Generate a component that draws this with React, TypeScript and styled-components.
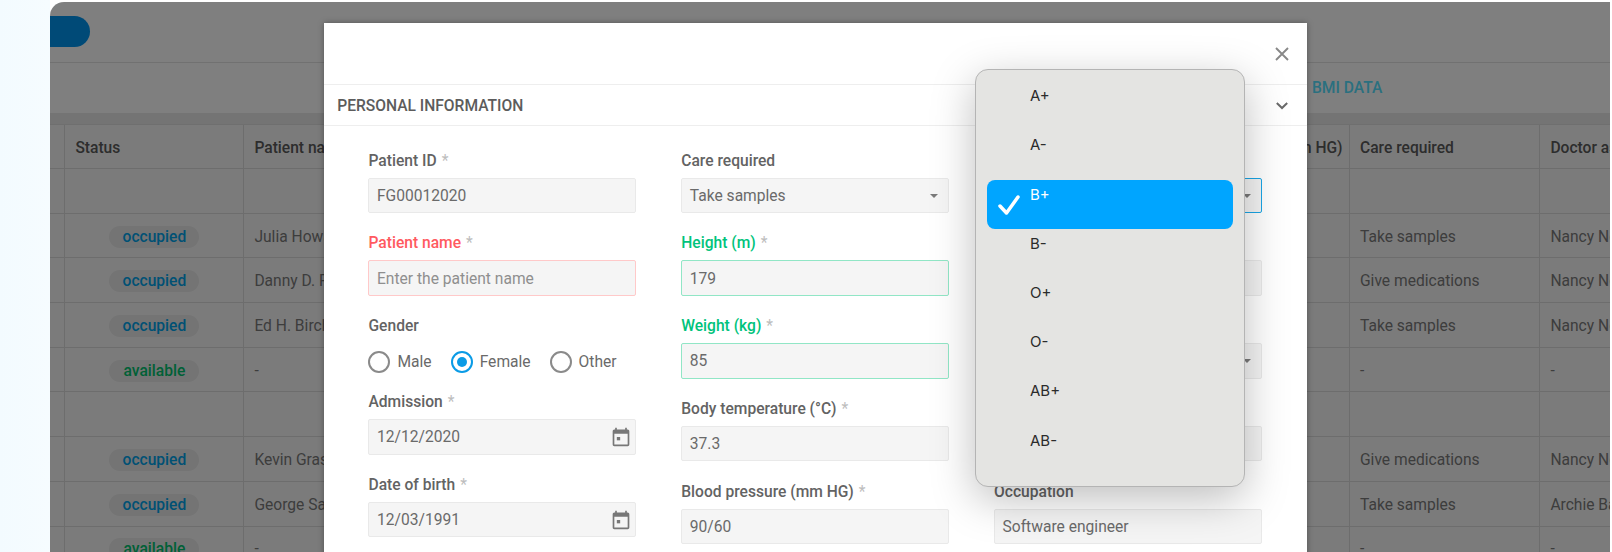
import React from "react";
import styled, { createGlobalStyle } from "styled-components";

const Global = createGlobalStyle`
  html, body { margin: 0; padding: 0; background: #ffffff; }
  * { box-sizing: border-box; }
  body { font-family: Roboto, "Liberation Sans", sans-serif; overflow: hidden; }
`;

const Page = styled.div`
  width: 1612px;
  height: 552px;
  padding: 2px 2px 0 50px;
  background: linear-gradient(90deg, #f3fbff 0, #f6fcff 50px, #ffffff 50px);
  overflow: hidden;
`;

const Card = styled.div`
  position: relative;
  height: 550px;
  background: #ffffff;
  border-radius: 14px 0 0 0;
  overflow: hidden;
`;

const TopBar = styled.div`
  height: 61px;
  padding-top: 14px;
  border-bottom: 1px solid #e2e2e2;
`;

const PrimaryButton = styled.div`
  width: 40px;
  height: 31px;
  background: #0095ee;
  border-radius: 0 16px 16px 0;
`;

const Tabs = styled.div`
  height: 50px;
  padding: 0 0 0 1262px;
  display: flex;
  align-items: center;
`;

const Tab = styled.span`
  font-size: 15.6px;
  font-weight: 500;
  color: #55e0ff;
`;

const Band = styled.div`
  height: 11px;
  background: #e8e8e8;
`;

const Table = styled.div`
  background: #f7f7f7;
`;

const Row = styled.div<{ $head?: boolean }>`
  display: grid;
  grid-template-columns: 15.4px 179px 300px 615.6px 190px 190.4px 1fr;
  height: ${(p) => (p.$head ? "45px" : "44.7px")};
  border-top: ${(p) => (p.$head ? "1px solid #dedede" : "0")};
  border-bottom: 1px solid #dadada;
`;

const Cell = styled.div<{ $head?: boolean; $center?: boolean }>`
  display: flex;
  align-items: center;
  justify-content: ${(p) => (p.$center ? "center" : "flex-start")};
  padding: 2px 10px 0;
  border-right: 1px solid #dadada;
  font-size: 15.6px;
  font-weight: ${(p) => (p.$head ? 500 : 400)};
  color: ${(p) => (p.$head ? "#5a5a5a" : "#7a7a7a")};
  white-space: nowrap;
  overflow: hidden;
  &:first-child { padding: 0; }
  &:last-child { border-right: 0; }
`;

const StatusPill = styled.span<{ $status: string }>`
  width: 90px;
  height: 22px;
  display: flex;
  align-items: center;
  justify-content: center;
  border-radius: 11px;
  background: #e8e8e8;
  font-size: 15.6px;
  font-weight: 500;
  color: ${(p) => (p.$status === "available" ? "#00c16e" : "#00a2e8")};
`;

const Overlay = styled.div`
  position: absolute;
  inset: 0;
  background: rgba(0, 0, 0, 0.5);
`;

const Modal = styled.div`
  position: absolute;
  left: 273.7px;
  top: 20.7px;
  width: 983.3px;
  height: 540px;
  background: #ffffff;
  box-shadow: 0 0 6px rgba(0, 0, 0, 0.35);
`;

const ModalHead = styled.div`
  height: 62.3px;
  border-bottom: 1.5px solid #eeeeee;
  display: flex;
  align-items: center;
  justify-content: flex-end;
  padding: 2px 17px 0 0;
`;

const CloseBtn = styled.span`
  display: flex;
  color: #888888;
`;

const ChevronBtn = styled.span`
  display: flex;
  color: #6a6a6a;
`;

const SectionHead = styled.div`
  height: 41.5px;
  border-bottom: 1.5px solid #eeeeee;
  display: flex;
  align-items: center;
  justify-content: space-between;
  padding: 1px 17px 0 13.5px;
  font-size: 15.6px;
  font-weight: 500;
  color: #5c5c5c;
`;

const FormGrid = styled.div`
  display: grid;
  grid-template-columns: repeat(3, 267.6px);
  column-gap: 45.2px;
  padding: 23.3px 0 0 44.8px;
`;

const Column = styled.div`
  display: flex;
  flex-direction: column;
`;

const Field = styled.div<{ $short?: boolean }>`
  display: flex;
  flex-direction: column;
  height: ${(p) => (p.$short ? "76px" : "82.7px")};
`;

const Label = styled.label<{ $tone?: string }>`
  height: 20px;
  line-height: 22px;
  margin-bottom: 8px;
  font-size: 15.6px;
  font-weight: 500;
  white-space: nowrap;
  color: ${(p) => (p.$tone === "error" ? "#ff5a5f" : p.$tone === "ok" ? "#00c37c" : "#636363")};
`;

const Star = styled.span`
  color: #bdbdbd;
  margin-left: 5px;
  font-weight: 400;
`;

const InputBox = styled.div<{ $tone?: string }>`
  height: 35.4px;
  display: flex;
  align-items: center;
  justify-content: space-between;
  padding: 1px 4.5px 0 7.5px;
  background: #f5f5f5;
  border: 1.5px solid
    ${(p) =>
      p.$tone === "error"
        ? "#ffc9c9"
        : p.$tone === "ok"
          ? "#91e6c6"
          : p.$tone === "focus"
            ? "#1aa7e8"
            : "#e9e9e9"};
  border-radius: 2px;
  font-size: 15.6px;
  color: #6a6a6a;
`;

const Placeholder = styled.span`
  color: #8f8f8f;
`;

const Caret = styled.span`
  width: 0;
  height: 0;
  border-left: 4.5px solid transparent;
  border-right: 4.5px solid transparent;
  border-top: 4px solid #7a7a7a;
  margin-right: 5px;
`;

const RadioRow = styled.div`
  display: flex;
  align-items: center;
  height: 22px;
  margin-top: 7.5px;
`;

const RadioItem = styled.span`
  display: flex;
  align-items: center;
  gap: 7px;
  margin-right: 19px;
  font-size: 15.6px;
  color: #6a6a6a;
`;

const RadioCircle = styled.span<{ $on?: boolean }>`
  width: 22px;
  height: 22px;
  border-radius: 50%;
  border: 2px solid ${(p) => (p.$on ? "#0a9be6" : "#8a8a8a")};
  display: flex;
  align-items: center;
  justify-content: center;
  &::after {
    content: "";
    width: 10px;
    height: 10px;
    border-radius: 50%;
    background: ${(p) => (p.$on ? "#0a9be6" : "transparent")};
  }
`;

const Popup = styled.div`
  position: absolute;
  left: 925px;
  top: 66.6px;
  width: 270px;
  height: 418px;
  padding: 11.7px 11px 0;
  background: #e4e4e2;
  border: 1px solid #b4b4b4;
  border-radius: 13px;
  box-shadow: 0 12px 44px rgba(0, 0, 0, 0.26);
`;

const PopupItem = styled.div<{ $on?: boolean }>`
  position: relative;
  height: 49.2px;
  padding: 5px 0 0 43px;
  line-height: 20px;
  font-family: Inter, Roboto, sans-serif;
  font-size: 15px;
  border-radius: 8px;
  color: ${(p) => (p.$on ? "#ffffff" : "#2b2b2b")};
  background: ${(p) => (p.$on ? "#00a5ff" : "transparent")};
`;

const Check = styled.svg`
  position: absolute;
  left: 10.5px;
  top: 14px;
`;

type F = { label: string; value?: string; placeholder?: string; tone?: string; star?: boolean; select?: boolean; date?: boolean; boxTone?: string };

const col1: F[] = [
  { label: "Patient ID", value: "FG00012020", star: true },
  { label: "Patient name", placeholder: "Enter the patient name", tone: "error", star: true },
];
const col1b: F[] = [
  { label: "Admission", value: "12/12/2020", star: true, date: true },
  { label: "Date of birth", value: "12/03/1991", star: true, date: true },
];
const col2: F[] = [
  { label: "Care required", value: "Take samples", select: true },
  { label: "Height (m)", value: "179", tone: "ok", star: true },
  { label: "Weight (kg)", value: "85", tone: "ok", star: true },
  { label: "Body temperature (°C)", value: "37.3", star: true },
  { label: "Blood pressure (mm HG)", value: "90/60", star: true },
];
const col3: F[] = [
  { label: "Blood type", value: "", select: true, boxTone: "focus" },
  { label: "Phone", value: "" },
  { label: "Marital status", value: "", select: true },
  { label: "Address", value: "" },
  { label: "Occupation", value: "Software engineer" },
];

const Calendar = () => (
  <svg width="20" height="20" viewBox="0 0 24 24" fill="#777777">
    <path d="M20 3h-1V1h-2v2H7V1H5v2H4c-1.1 0-2 .9-2 2v16c0 1.1.9 2 2 2h16c1.1 0 2-.9 2-2V5c0-1.1-.9-2-2-2zm0 18H4V8h16v13z" />
    <rect x="7" y="12" width="4" height="4" />
  </svg>
);

const FieldView = ({ f }: { f: F }) => (
  <Field>
    <Label $tone={f.tone}>
      {f.label}
      {f.star && <Star>*</Star>}
    </Label>
    <InputBox $tone={f.boxTone ?? f.tone}>
      {f.placeholder ? <Placeholder>{f.placeholder}</Placeholder> : <span>{f.value}</span>}
      {f.select && <Caret />}
      {f.date && <Calendar />}
    </InputBox>
  </Field>
);

const rows = [
  null,
  ["occupied", "Julia Howard", "Take samples", "Nancy Nolan"],
  ["occupied", "Danny D. Ford", "Give medications", "Nancy Nolan"],
  ["occupied", "Ed H. Birch", "Take samples", "Nancy Nolan"],
  ["available", "-", "-", "-"],
  null,
  ["occupied", "Kevin Grass", "Give medications", "Nancy Nolan"],
  ["occupied", "George Sands", "Take samples", "Archie Barnes"],
  ["available", "-", "-", "-"],
];

const bloodTypes = ["A+", "A-", "B+", "B-", "O+", "O-", "AB+", "AB-"];

export default function App() {
  return (
    <Page>
      <Global />
      <Card>
        <TopBar>
          <PrimaryButton />
        </TopBar>
        <Tabs>
          <Tab>BMI DATA</Tab>
        </Tabs>
        <Band />
        <Table>
          <Row $head>
            <Cell $head />
            <Cell $head>Status</Cell>
            <Cell $head>Patient name</Cell>
            <Cell $head />
            <Cell $head>Blood pressure (mm HG)</Cell>
            <Cell $head>Care required</Cell>
            <Cell $head>Doctor assigned</Cell>
          </Row>
          {rows.map((r, i) => (
            <Row key={i}>
              <Cell />
              <Cell $center>{r && <StatusPill $status={r[0]}>{r[0]}</StatusPill>}</Cell>
              <Cell>{r && r[1]}</Cell>
              <Cell />
              <Cell />
              <Cell>{r && r[2]}</Cell>
              <Cell>{r && r[3]}</Cell>
            </Row>
          ))}
        </Table>
        <Overlay />
        <Modal>
          <ModalHead>
            <CloseBtn>
              <svg width="16" height="16" viewBox="0 0 16 16" fill="none" stroke="currentColor" strokeWidth="1.9">
                <path d="M2 2l12 12M14 2L2 14" />
              </svg>
            </CloseBtn>
          </ModalHead>
          <SectionHead>
            PERSONAL INFORMATION
            <ChevronBtn>
              <svg width="16" height="16" viewBox="0 0 16 16" fill="none" stroke="currentColor" strokeWidth="2">
                <path d="M2.8 5l5.2 5 5.2-5" />
              </svg>
            </ChevronBtn>
          </SectionHead>
          <FormGrid>
            <Column>
              {col1.map((f) => (
                <FieldView key={f.label} f={f} />
              ))}
              <Field $short>
                <Label>Gender</Label>
                <RadioRow>
                  <RadioItem>
                    <RadioCircle />
                    Male
                  </RadioItem>
                  <RadioItem>
                    <RadioCircle $on />
                    Female
                  </RadioItem>
                  <RadioItem>
                    <RadioCircle />
                    Other
                  </RadioItem>
                </RadioRow>
              </Field>
              {col1b.map((f) => (
                <FieldView key={f.label} f={f} />
              ))}
            </Column>
            <Column>
              {col2.map((f) => (
                <FieldView key={f.label} f={f} />
              ))}
            </Column>
            <Column>
              {col3.map((f) => (
                <FieldView key={f.label} f={f} />
              ))}
            </Column>
          </FormGrid>
        </Modal>
        <Popup>
          {bloodTypes.map((t) => (
            <PopupItem key={t} $on={t === "B+"}>
              {t === "B+" && (
                <Check width="22" height="22" viewBox="0 0 22 22" fill="none" stroke="#ffffff" strokeWidth="3.5" strokeLinecap="round" strokeLinejoin="round">
                  <path d="M2 12l6.5 7L20 3" />
                </Check>
              )}
              {t}
            </PopupItem>
          ))}
        </Popup>
      </Card>
    </Page>
  );
}
